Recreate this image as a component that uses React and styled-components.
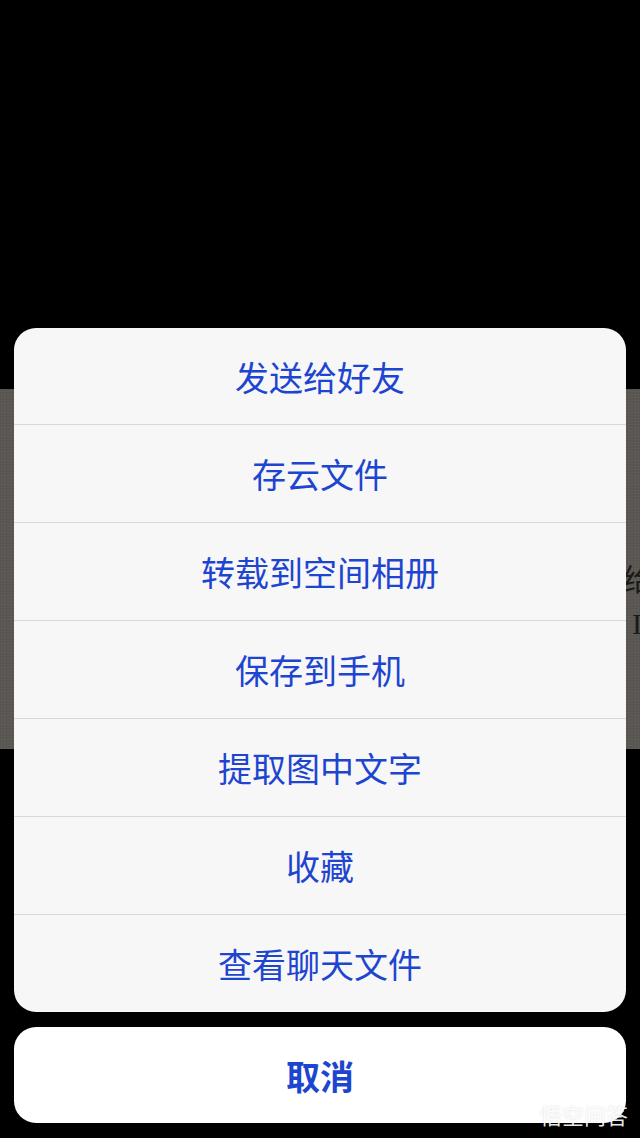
import React from 'react'
import styled, { createGlobalStyle } from 'styled-components'

const GlobalStyle = createGlobalStyle`
  html, body {
    margin: 0;
    padding: 0;
    background: #000;
  }
  * {
    box-sizing: border-box;
  }
`

const actions = [
   '发送给好友',
   '存云文件',
   '转载到空间相册',
   '保存到手机',
   '提取图中文字',
   '收藏',
   '查看聊天文件',
]

export default function App() {
   return (
      <>
         <GlobalStyle />
         <Screen>
            <Backdrop>
               <Photo>
                  <PhotoLine $indent={623} $top={176}>给出</PhotoLine>
                  <PhotoLine $indent={632} $top={14}>I</PhotoLine>
               </Photo>
            </Backdrop>

            <SheetLayer>
               <Sheet>
                  {actions.map((label) => (
                     <Action key={label}>{label}</Action>
                  ))}
               </Sheet>
               <Cancel>取消</Cancel>
            </SheetLayer>

            <Watermark>
               <svg width="21" height="12" viewBox="0 0 21 12" fill="none">
                  <path
                     d="M10.5 6c-1.6-2.6-3.2-4-5-4C3.3 2 1.5 3.8 1.5 6s1.8 4 4 4c1.8 0 3.4-1.4 5-4zm0 0c1.6 2.6 3.2 4 5 4 2.2 0 4-1.8 4-4s-1.8-4-4-4c-1.8 0-3.4 1.4-5 4z"
                     stroke="currentColor"
                     strokeWidth="2.2"
                  />
               </svg>
               <span>悟空问答</span>
            </Watermark>
         </Screen>
      </>
   )
}

const Screen = styled.div`
  position: relative;
  display: grid;
  grid-template-columns: minmax(0, 1fr);
  grid-template-rows: minmax(0, 1fr);
  width: 640px;
  height: 1138px;
  overflow: hidden;
  background: #000;
  font-family: "Noto Sans CJK SC", "Noto Sans", sans-serif;
  > * {
    grid-area: 1 / 1;
    min-width: 0;
  }
`

const Backdrop = styled.div`
  padding-top: 389px;
`

const Photo = styled.div`
  width: 100%;
  height: 360px;
  overflow: hidden;
  background:
    repeating-linear-gradient(90deg, rgba(0, 0, 0, 0.06) 0 1px, transparent 1px 3px),
    repeating-linear-gradient(0deg, rgba(255, 255, 255, 0.03) 0 1px, transparent 1px 3px),
    #5b5752;
`

const PhotoLine = styled.div`
  padding-left: ${(p) => p.$indent}px;
  margin-top: ${(p) => p.$top}px;
  white-space: nowrap;
  overflow: hidden;
  font-family: "Liberation Serif", "Noto Sans CJK SC", serif;
  font-size: 30px;
  line-height: 30px;
  color: #1c1a18;
`

const SheetLayer = styled.div`
  display: flex;
  flex-direction: column;
  justify-content: flex-end;
  gap: 15px;
  padding: 0 14px 15px;
`

const Sheet = styled.div`
  display: flex;
  flex-direction: column;
  background: #f7f7f7;
  border-radius: 22px;
  overflow: hidden;
`

const Action = styled.div`
  display: flex;
  align-items: center;
  justify-content: center;
  height: 96px;
  font-size: 34px;
  color: #1e45d0;
  & + & {
    height: 98px;
    border-top: 1px solid #d8d8d8;
  }
`

const Cancel = styled.div`
  display: flex;
  align-items: center;
  justify-content: center;
  height: 96px;
  background: #fff;
  border-radius: 22px;
  font-size: 34px;
  font-weight: 700;
  color: #1e45d0;
`

const Watermark = styled.div`
  position: absolute;
  right: 12px;
  bottom: 12px;
  display: flex;
  align-items: center;
  gap: 6px;
  color: rgba(255, 255, 255, 0.92);
  font-size: 22px;
  line-height: 24px;
  text-shadow: 0 0 2px rgba(0, 0, 0, 0.15);
`
